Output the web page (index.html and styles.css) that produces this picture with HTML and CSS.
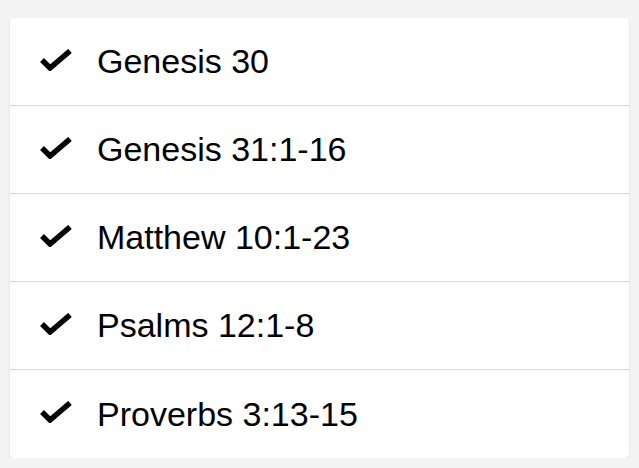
FILE: index.html
```html
<!DOCTYPE html>
<html>
<head>
<meta charset="utf-8">
<link rel="stylesheet" href="styles.css">
</head>
<body>
<div class="card">
  <div class="row"><svg class="check" viewBox="0 0 32 22"><path d="M2 11 L10 19 L30 2" /></svg><span class="label">Genesis 30</span></div>
  <div class="row"><svg class="check" viewBox="0 0 32 22"><path d="M2 11 L10 19 L30 2" /></svg><span class="label">Genesis 31:1-16</span></div>
  <div class="row"><svg class="check" viewBox="0 0 32 22"><path d="M2 11 L10 19 L30 2" /></svg><span class="label">Matthew 10:1-23</span></div>
  <div class="row"><svg class="check" viewBox="0 0 32 22"><path d="M2 11 L10 19 L30 2" /></svg><span class="label">Psalms 12:1-8</span></div>
  <div class="row"><svg class="check" viewBox="0 0 32 22"><path d="M2 11 L10 19 L30 2" /></svg><span class="label">Proverbs 3:13-15</span></div>
</div>
</body>
</html>
```
FILE: styles.css
```css
html, body {
  margin: 0;
  padding: 0;
  background: #f4f4f4;
}
body {
  padding: 18px 10px 0 10px;
  font-family: "Liberation Sans", Arial, sans-serif;
}
.card {
  background: #fff;
  border-radius: 4px;
  box-shadow: 0 1px 2px rgba(0,0,0,0.15);
  overflow: hidden;
}
.row {
  height: 87px;
  display: flex;
  align-items: center;
  padding-left: 30px;
  border-bottom: 1px solid #d6d6d6;
}
.row:last-child {
  border-bottom: none;
  height: 88px;
}
.check {
  width: 32px;
  height: 22px;
  margin-right: 25px;
  margin-top: -4px;
  flex: none;
}
.check path {
  fill: none;
  stroke: #000;
  stroke-width: 5.5;
  stroke-linejoin: miter;
}
.label {
  font-size: 34px;
  color: #000;
}
```
